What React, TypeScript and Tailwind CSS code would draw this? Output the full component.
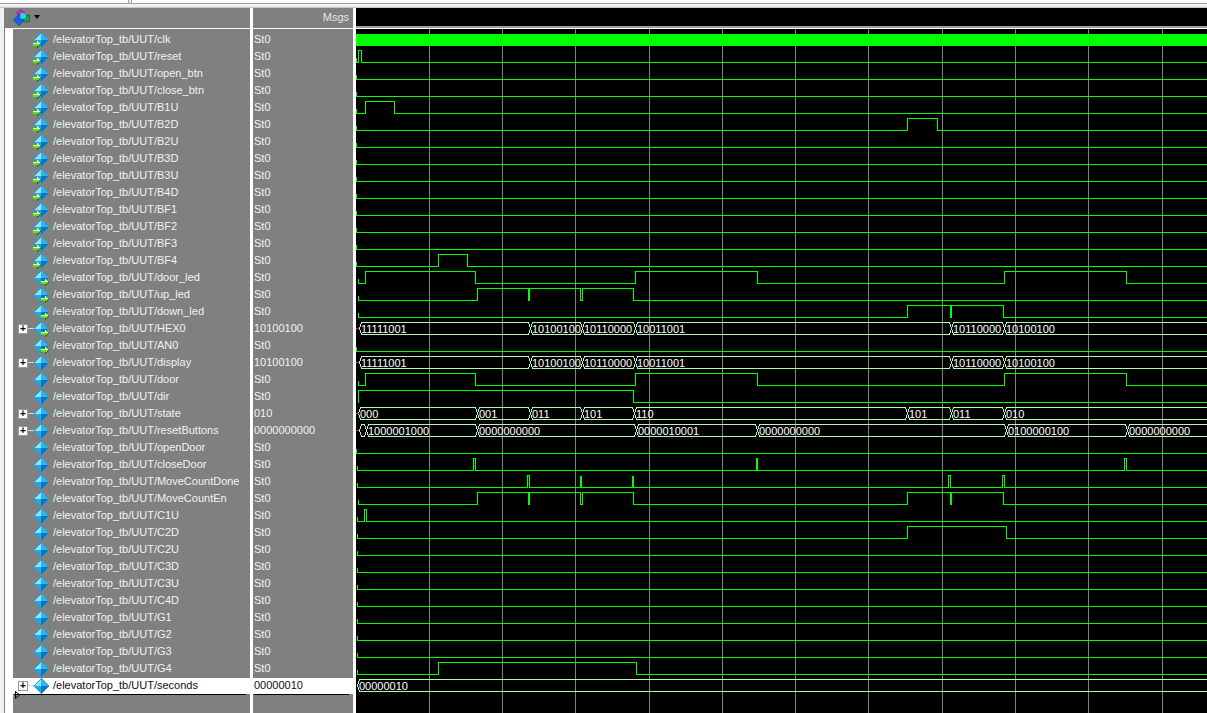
const FONT = "font-['Liberation_Sans',Arial,sans-serif]";

type Kind = "in" | "out" | "int";
type Sig = { name: string; val: string; kind: Kind; plus?: boolean };

const inputs = ["clk", "reset", "open_btn", "close_btn", "B1U", "B2D", "B2U", "B3D", "B3U", "B4D", "BF1", "BF2", "BF3", "BF4"];
const rest = ["openDoor", "closeDoor", "MoveCountDone", "MoveCountEn", "C1U", "C2D", "C2U", "C3D", "C3U", "C4D", "G1", "G2", "G3", "G4"];

const signals: Sig[] = [
  ...inputs.map((name) => ({ name, val: "St0", kind: "in" as Kind })),
  { name: "door_led", val: "St0", kind: "out" },
  { name: "up_led", val: "St0", kind: "out" },
  { name: "down_led", val: "St0", kind: "out" },
  { name: "HEX0", val: "10100100", kind: "out", plus: true },
  { name: "AN0", val: "St0", kind: "out" },
  { name: "display", val: "10100100", kind: "int", plus: true },
  { name: "door", val: "St0", kind: "int" },
  { name: "dir", val: "St0", kind: "int" },
  { name: "state", val: "010", kind: "int", plus: true },
  { name: "resetButtons", val: "0000000000", kind: "int", plus: true },
  ...rest.map((name) => ({ name, val: "St0", kind: "int" as Kind })),
  { name: "seconds", val: "00000010", kind: "int", plus: true },
];

const GRID = [429, 502, 575, 649, 722, 795, 868, 942, 1015, 1088, 1162];
const END = 851; // wave width, x below is relative to the page
const OX = 356;
const GREEN = "#00ff00";

const low = (row: number) => 45 + 17 * row;

// edges: x positions where the signal toggles, starting low
type Wave = { row: number; edges?: number[]; x0?: number; solid?: number[] };

const waves: Wave[] = [
  { row: 1, edges: [358, 361], x0: 356 },
  { row: 2, x0: 356 }, { row: 3, x0: 356 },
  { row: 4, edges: [365, 394], x0: 356 },
  { row: 5, edges: [907, 937], x0: 356 },
  { row: 6, x0: 356 }, { row: 7, x0: 356 }, { row: 8, x0: 356 }, { row: 9, x0: 356 },
  { row: 10, x0: 356 }, { row: 11, x0: 356 }, { row: 12, x0: 356 },
  { row: 13, edges: [438, 467], x0: 356 },
  { row: 14, edges: [365, 475, 635, 757, 1004, 1126], x0: 358 },
  { row: 15, edges: [477, 580, 582, 633], x0: 358, solid: [529] },
  { row: 16, edges: [907, 1003], solid: [951], x0: 358 },
  { row: 18, x0: 356 },
  { row: 20, edges: [365, 475, 635, 757, 1004, 1126], x0: 358 },
  { row: 21, edges: [358, 633], x0: 358 },
  { row: 24, x0: 356 },
  { row: 25, edges: [473, 475, 756, 757, 1124, 1126] },
  { row: 26, edges: [527, 529, 948, 950, 1002, 1004] },
  { row: 27, edges: [477, 580, 582, 633, 907, 1003], x0: 358, solid: [529, 951] },
  { row: 28, edges: [364, 366] },
  { row: 29, edges: [907, 1006] },
  { row: 30 }, { row: 31 }, { row: 32 }, { row: 33 }, { row: 34 }, { row: 35 }, { row: 36 },
  { row: 37, edges: [438, 636] },
];

function wavePath(w: Wave) {
  const y = low(w.row) + 0.5;
  const hi = y - 12;
  const x0 = w.x0 ?? 357;
  let d = `M${x0 - OX + 0.5} ${y - 5}L${x0 - OX + 0.5} ${y}`;
  let up = false;
  for (const e of w.edges ?? []) {
    const x = e - OX + 0.5;
    d += `L${x} ${up ? hi : y}L${x} ${up ? y : hi}`;
    up = !up;
  }
  d += `L${END} ${up ? hi : y}`;
  return d;
}

type Bus = { row: number; segs: [number, string][] };

const hexSegs: [number, string][] = [
  [359, "11111001"],
  [530, "10100100"],
  [582, "10110000"],
  [635, "10011001"],
  [951, "10110000"],
  [1004, "10100100"],
];

const buses: Bus[] = [
  { row: 17, segs: hexSegs },
  { row: 19, segs: hexSegs },
  {
    row: 22,
    segs: [
      [358, "000"], [477, "001"], [530, "011"], [582, "101"], [634, "110"], [907, "101"], [951, "011"], [1004, "010"],
    ],
  },
  {
    row: 23,
    segs: [
      [359, ""], [366, "1000001000"], [477, "0000000000"], [636, "0000010001"], [757, "0000000000"], [1006, "0100000100"], [1127, "0000000000"],
    ],
  },
  { row: 38, segs: [[357, "00000010"]] },
];

function BusRow({ bus }: { bus: Bus }) {
  const y = low(bus.row) + 0.5;
  const top = y - 12;
  const mid = y - 6;
  let d = "";
  bus.segs.forEach(([x], i) => {
    const start = x - OX;
    const next = bus.segs[i + 1] ? bus.segs[i + 1][0] - OX : END + 4;
    d += `M${start + 0.5} ${mid}L${start + 2.5} ${top}L${next - 1.5} ${top}L${next + 0.5} ${mid}L${next - 1.5} ${y}L${start + 2.5} ${y}Z`;
  });
  return (
    <g>
      <path d={d} fill="none" stroke="#b4f8b4" strokeWidth="1" shapeRendering="crispEdges" />
      {bus.row !== 38 && <rect x={0} y={mid - 0.5} width={3} height={1} fill="#e02020" />}
      {bus.segs.map(([x, label], i) =>
        label ? (
          <text key={i} x={x - OX + 2} y={y - 1.5} fontSize="11" fill="#ffffff" fontFamily="'Liberation Sans', Arial, sans-serif">
            {label}
          </text>
        ) : null,
      )}
    </g>
  );
}

function WaveChart() {
  return (
    <svg width={END} height={684} viewBox={`0 29 ${END} 684`} className="block">
      {GRID.map((x) => (
        <rect key={x} x={x - OX} y={29} width={1} height={684} fill="#808080" />
      ))}
      <rect x={0} y={34} width={END} height={12} fill={GREEN} />
      {waves.map((w) => (
        <path key={w.row} d={wavePath(w)} fill="none" stroke={GREEN} strokeWidth="1" shapeRendering="crispEdges" />
      ))}
      {waves.flatMap((w) =>
        (w.solid ?? []).map((x) => (
          <rect key={`${w.row}-${x}`} x={x - OX - 1} y={low(w.row) - 12} width={2} height={13} fill={GREEN} />
        )),
      )}
      {[580, 632].map((x) => (
        <rect key={x} x={x - OX} y={low(26) - 11} width={2} height={11} fill={GREEN} />
      ))}
      {buses.map((b) => (
        <BusRow key={b.row} bus={b} />
      ))}
    </svg>
  );
}

function Arrow({ dx }: { dx: number }) {
  return (
    <g transform={`translate(${dx} 0)`}>
      <path d="M0 11H4V9H5L8 12.5L5 16H4V14H0Z" fill="#0f7a14" />
      <path d="M0 11H4V9H5L7 11.5L7 12H0Z" fill="#f0ff70" />
      <path d="M0 12H7L7 13L5 14H0Z" fill="#5fe01e" />
    </g>
  );
}

function Diamond({ kind }: { kind: Kind }) {
  return (
    <svg width="16" height="16" viewBox="0 0 16 16" className="relative block shrink-0" shapeRendering="crispEdges">
      <path d="M8 0L16 8L8 16L0 8Z" fill="#1a9ede" />
      <path d="M8 1L8 8L1 8Z" fill="#8fe4f8" />
      <path d="M8 1L15 8L8 8Z" fill="#30b4ec" />
      <path d="M1 8L8 8L8 15Z" fill="#23a8e6" />
      <path d="M15 8L8 8L8 15Z" fill="#0b74c4" />
      {kind === "in" && <Arrow dx={0} />}
      {kind === "out" && <Arrow dx={8} />}
    </svg>
  );
}

function HeaderIcon() {
  return (
    <svg width="17" height="17" viewBox="0 0 17 17" className="block">
      <path d="M8 0.5L12 4L8 8.5L3.5 4Z" fill="#c030c0" stroke="#701070" strokeWidth="0.6" />
      <rect x="9" y="6" width="7.5" height="7" fill="#12a04a" stroke="#0a5a2a" strokeWidth="0.6" />
      <path d="M6 5L11 11L6 16.5L0.5 11Z" fill="#1560e0" stroke="#0a3a90" strokeWidth="0.6" />
      <circle cx="10" cy="7" r="3" fill="#30d0f0" />
    </svg>
  );
}

function Row({ s, idx }: { s: Sig; idx: number }) {
  const selected = idx === signals.length - 1;
  return (
    <div className={`relative flex h-[17px] items-center pl-[5px] ${selected ? "border-t border-[#808080] bg-white pb-[1px]" : ""}`}>
      <div className="relative flex w-[11px] shrink-0 items-center">
        {s.plus && (
          <>
            <span className="flex h-[10px] w-[10px] items-center justify-center border border-[#9a9a9a] bg-white text-[10px] leading-none font-bold text-black">
              +
            </span>
            <span className="absolute left-[10px] h-px w-[6px] bg-[#d4d4d4]" />
          </>
        )}
      </div>
      <div className="ml-[1px] flex w-[21px] shrink-0 justify-center">
        <Diamond kind={s.kind} />
      </div>
      <span className={`ml-[2px] text-[11px] leading-none whitespace-nowrap ${selected ? "text-[#101010]" : "text-[#f2f2f2]"}`}>
        /elevatorTop_tb/UUT/{s.name}
      </span>
    </div>
  );
}

export default function App() {
  return (
    <div className={`flex h-[713px] w-[1207px] flex-col overflow-hidden bg-[#f0f0f0] ${FONT}`}>
      {/* tab stubs along the top */}
      <div className="flex h-[4px] shrink-0 border-b border-[#a0a0a0]">
        <div className="h-[3px] w-[129px] border-r border-[#a0a0a0] bg-white" />
        <div className="ml-[2px] h-[3px] flex-1 border-l border-[#a0a0a0] bg-white" />
      </div>
      <div className="h-[3px] shrink-0" />
      <div className="h-px shrink-0 bg-[#c8c8c8]" />
      <div className="flex min-h-0 flex-1 border-l-[4px] border-[#f0f0f0]">
        {/* names */}
        <div className="relative flex w-[246px] shrink-0 flex-col border-l border-[#808080] bg-white">
          <div className="flex h-[20px] shrink-0 items-center bg-[#808080] pb-[2px] pl-[8px]">
            <HeaderIcon />
            <span className="ml-[4px] h-0 w-0 border-x-[3px] border-t-[4px] border-x-transparent border-t-black" />
          </div>
          <div className="h-px shrink-0 bg-white" />
          <div className="flex min-h-0 flex-1 pl-[8px]">
            <div className="flex-1 bg-[#808080] pt-[2px]">
              {signals.map((s, i) => (
                <Row key={s.name} s={s} idx={i} />
              ))}
              <div className="ml-[1px] h-px w-[232px] bg-black" />
            </div>
          </div>
          {/* cursor marker */}
          <svg width="5" height="8" viewBox="0 0 5 8" className="absolute top-[683px] left-[10px]">
            <path d="M0.5 0.5L4.5 4L0.5 7.5Z" fill="none" stroke="#000000" strokeWidth="1" />
          </svg>
        </div>
        <div className="w-[3px] shrink-0 bg-white" />
        {/* values */}
        <div className="flex w-[100px] shrink-0 flex-col bg-white">
          <div className="flex h-[20px] shrink-0 items-center justify-end bg-[#808080] pr-[4px] pb-[2px] text-[11px] text-[#e4e4e4]">Msgs</div>
          <div className="h-px shrink-0 bg-white" />
          <div className="flex-1 bg-[#808080] pt-[2px]">
            {signals.map((s, i) => (
              <div
                key={s.name}
                className={`flex h-[17px] items-center pl-[1px] text-[11px] leading-none ${i === signals.length - 1 ? "border-t border-[#808080] bg-white pb-[1px] text-[#101010]" : "text-[#f2f2f2]"}`}
              >
                {s.val}
              </div>
            ))}
            <div className="ml-[1px] h-px w-[95px] bg-black" />
          </div>
        </div>
        <div className="w-[3px] shrink-0 bg-white" />
        {/* waves */}
        <div className="flex min-w-0 flex-1 flex-col bg-black">
          <div className="h-[18px] shrink-0 bg-black" />
          <div className="h-[2px] shrink-0 bg-[#a0a0a0]" />
          <div className="h-px shrink-0 bg-white" />
          <WaveChart />
        </div>
      </div>
    </div>
  );
}
